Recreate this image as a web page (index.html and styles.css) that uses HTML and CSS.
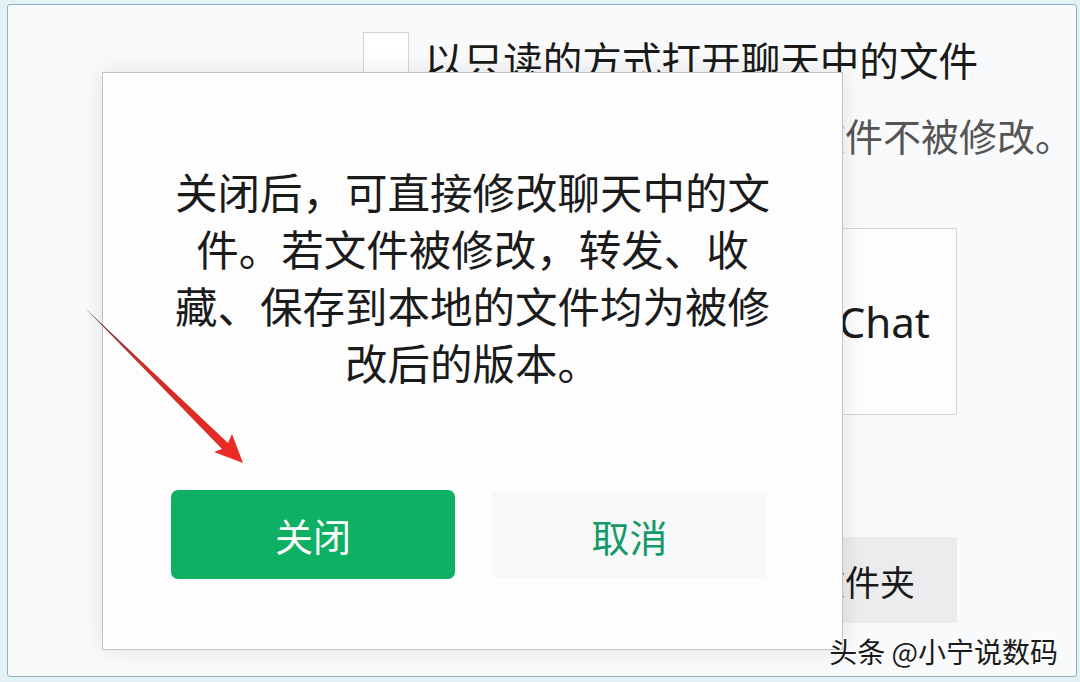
FILE: index.html
```html
<!DOCTYPE html>
<html lang="zh-CN">
<head>
    <meta charset="UTF-8">
    <title>关闭只读</title>
    <link rel="stylesheet" href="styles.css">
</head>
<body>
    <div class="window">
        <div class="settings">
            <div class="option">
                <span class="checkbox"></span>
                <span class="option-label">以只读的方式打开聊天中的文件</span>
            </div>
            <p class="option-desc">开启后，可保证聊天中文件不被修改。</p>
            <div class="path-box"><span>WeChat</span></div>
            <div class="folder-row">
                <button class="folder-btn">打开文件夹</button>
            </div>
        </div>

        <!-- 弹窗 -->
        <div class="dialog">
            <p class="dialog-text">关闭后，可直接修改聊天中的文<br>件。若文件被修改，转发、收<br>藏、保存到本地的文件均为被修<br>改后的版本。</p>
            <div class="dialog-actions">
                <button class="btn-primary">关闭</button>
                <button class="btn-cancel">取消</button>
            </div>
        </div>

        <div class="watermark">头条 @小宁说数码</div>
    </div>

    <svg class="arrow" width="1080" height="682" viewBox="0 0 1080 682">
        <defs>
            <linearGradient id="arrowFill" x1="85" y1="308" x2="243" y2="463" gradientUnits="userSpaceOnUse">
                <stop offset="0" stop-color="#5a3a40"/>
                <stop offset="0.35" stop-color="#c8302a"/>
                <stop offset="1" stop-color="#ee2a22"/>
            </linearGradient>
        </defs>
        <polygon points="85,308 228,443 232,434 243,463 214,452 222,449" fill="url(#arrowFill)"/>
    </svg>
</body>
</html>
```

FILE: styles.css
```css
html, body {
    margin: 0;
    height: 682px;
}

body {
    position: relative;
    box-sizing: border-box;
    padding: 4px 3px 5px 7px;
    background-color: #e3f3f5;
    font-family: "Noto Sans CJK SC", "Noto Sans", sans-serif;
    overflow: hidden;
}

.window {
    position: relative;
    height: 100%;
    box-sizing: border-box;
    border: 1px solid #8fb1bd;
    border-radius: 3px;
    background-color: #f9fafc;
}

/* 背景里的设置项 */
.settings {
    padding-left: 355px;
    padding-top: 27px;
}

.option {
    display: flex;
    align-items: flex-start;
}

.checkbox {
    width: 46px;
    height: 46px;
    box-sizing: border-box;
    border: 1px solid #d2d2d2;
    background-color: #fff;
}

.option-label {
    margin-left: 15px;
    font-size: 39.6px;
    line-height: 54px;
    color: #1a1a1a;
}

.option-desc {
    margin: 25px 0 0 64px;
    font-size: 38px;
    line-height: 48px;
    color: #555;
}

.path-box {
    margin: 69px 0 0 64px;
    width: 530px;
    height: 187px;
    box-sizing: border-box;
    border: 1px solid #d6d6d6;
    background-color: #fdfdfd;
    display: flex;
    align-items: center;
    justify-content: flex-end;
    padding-right: 26px;
    font-family: "Noto Sans", sans-serif;
    font-size: 42px;
    color: #1a1a1a;
}

.folder-row {
    margin-top: 122px;
    width: 594px;
    display: flex;
    justify-content: flex-end;
}

.folder-btn {
    width: 300px;
    height: 86px;
    border: none;
    background-color: #ececee;
    font-family: inherit;
    font-size: 35px;
    color: #1a1a1a;
    text-align: right;
    padding: 0 42px 0 0;
}

/* 弹窗 */
.dialog {
    position: absolute;
    left: 94px;
    top: 67px;
    width: 741px;
    height: 578px;
    box-sizing: border-box;
    border: 1px solid #c4c4c4;
    background-color: #fdfdfe;
    box-shadow: 0 0 22px rgba(0, 0, 0, 0.10);
    padding-top: 89px;
}

.dialog-text {
    margin: 0;
    text-align: center;
    font-size: 42.5px;
    line-height: 57px;
    color: #1b1b1b;
}

.dialog-actions {
    display: flex;
    align-items: flex-start;
    gap: 37px;
    margin-top: 100px;
    padding-left: 68px;
}

.btn-primary {
    width: 284px;
    height: 89px;
    border: none;
    border-radius: 7px;
    background-color: #0eb063;
    color: #fff;
    font-family: inherit;
    font-size: 38px;
    cursor: pointer;
}

.btn-cancel {
    margin-top: 2px;
    width: 275px;
    height: 86px;
    border: none;
    border-radius: 4px;
    background-color: #f7f8fa;
    color: #149a69;
    font-family: inherit;
    font-size: 38px;
    cursor: pointer;
}

.watermark {
    position: absolute;
    right: 18px;
    bottom: 9px;
    font-size: 28px;
    line-height: 32px;
    color: #1a1a1a;
    text-shadow: 0 0 2px #fff, 0 0 2px #fff;
}

.arrow {
    position: absolute;
    left: 0;
    top: 0;
    pointer-events: none;
}
```
